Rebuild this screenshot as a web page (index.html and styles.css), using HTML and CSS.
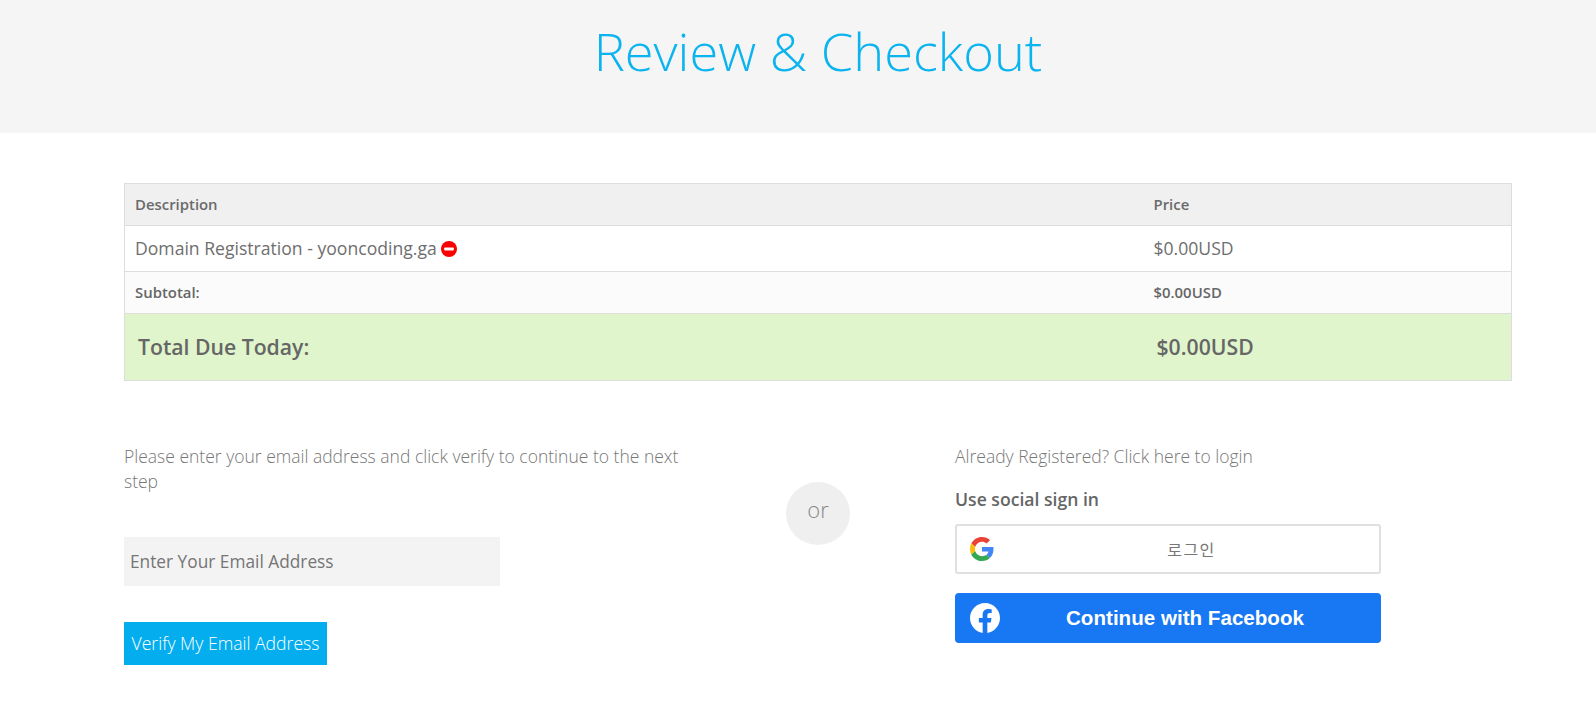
FILE: index.html
```html
<!DOCTYPE html>
<html lang="en">
<head>
<meta charset="utf-8">
<title>Review &amp; Checkout</title>
<link rel="stylesheet" href="styles.css">
</head>
<body>
<header class="banner"><h1>Review &amp; Checkout</h1></header>
<main class="content">
  <table class="cart">
    <colgroup><col class="col-desc"><col></colgroup>
    <thead>
      <tr><th>Description</th><th>Price</th></tr>
    </thead>
    <tbody>
      <tr class="item">
        <td><span class="item-name">Domain Registration - yooncoding.ga</span>
          <svg class="remove" viewBox="0 0 16 16" aria-hidden="true"><circle cx="8" cy="8" r="8" fill="#fa0000"/><rect x="3.2" y="6.4" width="9.6" height="3.2" rx="0.8" fill="#fff"/></svg>
        </td>
        <td>$0.00USD</td>
      </tr>
      <tr class="subtotal"><td>Subtotal:</td><td>$0.00USD</td></tr>
      <tr class="total"><td>Total Due Today:</td><td>$0.00USD</td></tr>
    </tbody>
  </table>
  <section class="auth">
    <div class="verify">
      <p class="lead">Please enter your email address and click verify to continue to the next step</p>
      <input class="email" type="text" placeholder="Enter Your Email Address">
      <button class="verify-btn" type="button">Verify My Email Address</button>
    </div>
    <div class="or"><span>or</span></div>
    <div class="login">
      <p class="login-link">Already Registered? Click here to login</p>
      <h2>Use social sign in</h2>
      <a class="social google">
        <svg class="g-icon" viewBox="0 0 48 48" aria-hidden="true">
          <path fill="#EA4335" d="M24 9.5c3.54 0 6.71 1.22 9.21 3.6l6.85-6.85C35.9 2.38 30.47 0 24 0 14.62 0 6.51 5.38 2.56 13.22l7.98 6.19C12.43 13.72 17.74 9.5 24 9.5z"/>
          <path fill="#4285F4" d="M46.98 24.55c0-1.57-.15-3.09-.38-4.55H24v9.02h12.94c-.58 2.96-2.26 5.48-4.78 7.18l7.73 6c4.51-4.18 7.09-10.36 7.09-17.65z"/>
          <path fill="#FBBC05" d="M10.53 28.59c-.48-1.45-.76-2.99-.76-4.59s.27-3.14.76-4.59l-7.98-6.19C.92 16.46 0 20.12 0 24c0 3.88.92 7.54 2.56 10.78l7.97-6.19z"/>
          <path fill="#34A853" d="M24 48c6.48 0 11.93-2.13 15.89-5.81l-7.73-6c-2.15 1.45-4.92 2.3-8.16 2.3-6.26 0-11.57-4.22-13.47-9.91l-7.98 6.19C6.51 42.62 14.62 48 24 48z"/>
        </svg>
        <span class="social-label google-label">로그인</span>
      </a>
      <a class="social facebook">
        <svg class="f-icon" viewBox="0 0 24 24" aria-hidden="true"><path fill="#fff" d="M24 12.07C24 5.4 18.63 0 12 0S0 5.4 0 12.07c0 6.03 4.39 11.02 10.13 11.93v-8.44H7.08v-3.49h3.05V9.41c0-3.02 1.79-4.69 4.53-4.69 1.31 0 2.69.24 2.69.24v2.97h-1.52c-1.49 0-1.96.93-1.96 1.89v2.25h3.33l-.53 3.49h-2.8V24C19.61 23.09 24 18.1 24 12.07z"/></svg>
        <span class="social-label">Continue with Facebook</span>
      </a>
    </div>
  </section>
</main>
</body>
</html>
```
FILE: styles.css
```css
* { box-sizing: border-box; }
html, body { margin: 0; background: #fff; overflow: hidden; }
body { font-family: "Open Sans", "Noto Sans", sans-serif; color: #666; height: 718px; }

.banner { height: 133px; background: #f5f5f5; padding: 17px 0 0 40px; text-align: center; }
.banner h1 { margin: 0; font-size: 52.4px; line-height: 68px; font-weight: 300; color: #0cb4ef; }

.content { padding: 50px 84px 0 124px; }

.cart { width: 100%; border-collapse: collapse; border: 1px solid #ddd; table-layout: fixed; }
.col-desc { width: 1019px; }
.cart th, .cart td { padding: 0 10px 2px; text-align: left; border-bottom: 1px solid #ddd; }
.cart th { height: 42px; font-size: 14.9px; font-weight: 600; background: #f0f0f0; color: #6a6a6a; }
.item td { height: 46px; font-size: 17.6px; background: #fff; color: #6e6e6e; }
.remove { width: 16px; height: 16px; vertical-align: -2px; }
.subtotal td { height: 42px; font-size: 14.9px; font-weight: 600; background: #fbfbfb; }
.total td { height: 67px; font-size: 21.2px; font-weight: 600; background: #e0f5cb; color: #666; padding-left: 13px; }

.auth { display: grid; grid-template-columns: 662px 64px 1fr; margin-top: 63px; }
.lead { margin: 0; max-width: 570px; font-size: 17.5px; line-height: 25px; font-weight: 300; color: #777; }
.email { display: block; width: 376px; height: 49px; margin-top: 43px; padding: 0 6px; border: 0; outline: 0; background: #f3f3f3; font: 400 17.3px "Open Sans", sans-serif; color: #666; }
.email::placeholder { color: #757575; opacity: 1; }
.verify-btn { display: block; width: 203px; height: 43px; margin-top: 36px; padding: 0 0 2px; border: 0; background: #04aeee; color: #fff; font: 300 17.6px "Open Sans", sans-serif; }

.or { width: 64px; height: 63px; margin-top: 38px; border-radius: 50%; background: #efefef; display: flex; align-items: center; justify-content: center; }
.or span { font-size: 22px; font-weight: 300; color: #888; line-height: 1; position: relative; top: -5px; }

.login { padding-left: 105px; }
.login-link { margin: 0; font-size: 17.5px; line-height: 25px; font-weight: 300; color: #777; }
.login h2 { margin: 18px 0 0; font-size: 17.6px; line-height: 24px; font-weight: 600; color: #666; }
.social { display: flex; align-items: center; width: 426px; height: 50px; text-decoration: none; }
.google { margin-top: 13px; border: 2px solid #e0e0e0; border-radius: 3px; background: #fff; padding-left: 13px; }
.g-icon { width: 24px; height: 24px; flex: none; }
.google-label { flex: 1; padding-left: 10px; text-align: center; font: 400 16px "Liberation Sans", "Noto Sans CJK KR", sans-serif; letter-spacing: 1.5px; color: #777; }
.facebook { margin-top: 19px; background: #1877f2; border-radius: 4px; padding-left: 15px; }
.f-icon { width: 30px; height: 30px; flex: none; }
.facebook .social-label { flex: 1; text-align: center; padding-right: 11px; font: 700 20.6px "Liberation Sans", Arial, sans-serif; color: #fff; }
```
